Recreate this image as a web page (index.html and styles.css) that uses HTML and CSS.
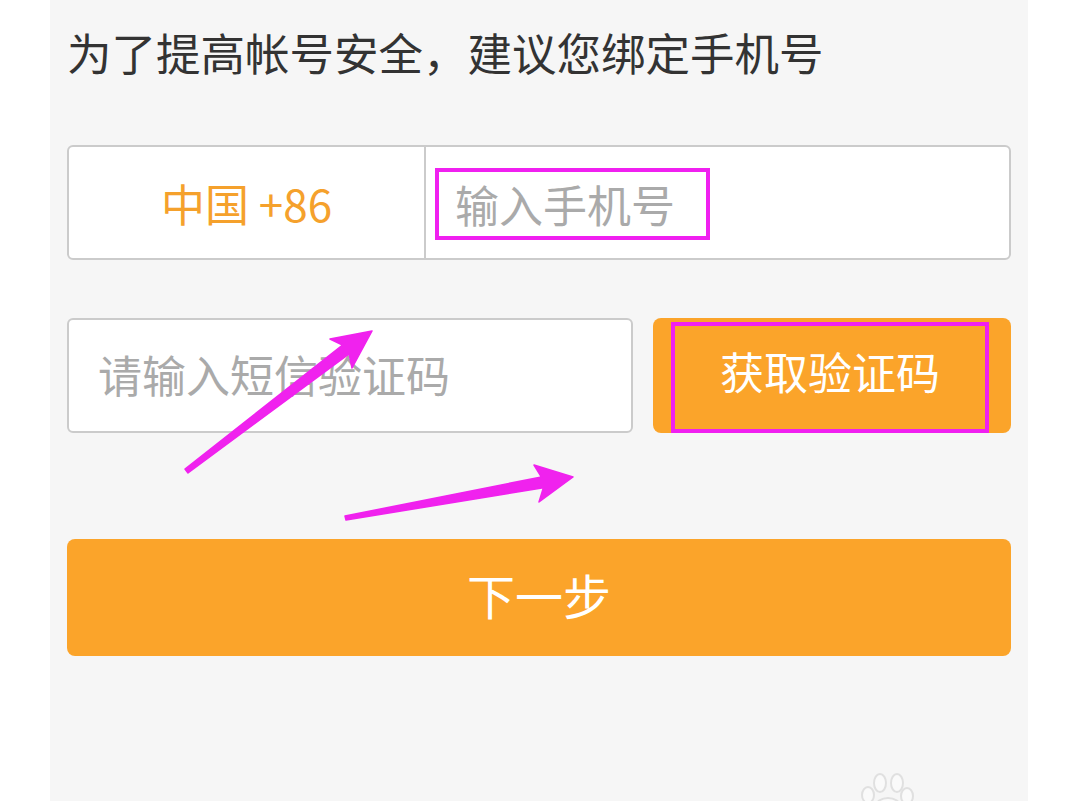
FILE: index.html
```html
<!DOCTYPE html>
<html lang="zh-CN">
<head>
<meta charset="utf-8">
<title>绑定手机号</title>
<link rel="stylesheet" href="styles.css">
</head>
<body>
<div class="panel">
  <h1 class="title">为了提高帐号安全，建议您绑定手机号</h1>
  <div class="phone-row">
    <div class="country">中国 +86</div>
    <div class="phone-input"><span class="mark mark-phone">输入手机号</span></div>
  </div>
  <div class="code-row">
    <div class="code-input">请输入短信验证码</div>
    <div class="code-btn"><span class="mark mark-btn">获取验证码</span></div>
  </div>
  <div class="next-btn">下一步</div>

  <svg class="arrows" viewBox="0 0 978 801" width="978" height="801" aria-hidden="true">
    <polygon class="arrow" points="135,469 138,473 299.1,353.8 302,368 322,331 280,339 292.5,345"/>
    <polygon class="arrow" points="295,516 296,520 493.4,487.8 489,502 523,477 484,465 491.4,477"/>
  </svg>

  <svg class="paw" viewBox="0 0 978 801" width="978" height="801" aria-hidden="true">
    <ellipse cx="818" cy="795" rx="6" ry="8"/>
    <ellipse cx="830" cy="783" rx="6" ry="9"/>
    <ellipse cx="847" cy="783" rx="6" ry="9"/>
    <ellipse cx="857" cy="796" rx="6" ry="8"/>
    <ellipse cx="838" cy="806" rx="12" ry="8"/>
  </svg>
</div>
</body>
</html>
```

FILE: styles.css
```css
* {
  box-sizing: border-box;
}

html, body {
  margin: 0;
  padding: 0;
  background: #ffffff;
}

body {
  font-family: "Noto Sans CJK SC", "Noto Sans", sans-serif;
  overflow: hidden;
}

.panel {
  position: relative;
  margin-left: 50px;
  width: 978px;
  height: 801px;
  background: #f6f6f6;
  padding: 0 17px;
  overflow: hidden;
}

.title {
  margin: 0;
  padding-top: 30px;
  font-size: 44.5px;
  line-height: 44px;
  font-weight: normal;
  color: #333333;
  white-space: nowrap;
}

.phone-row {
  margin-top: 71px;
  height: 115px;
  display: flex;
  background: #ffffff;
  border: 2px solid #cbcbcb;
  border-radius: 6px;
}

.country {
  width: 357px;
  border-right: 2px solid #cbcbcb;
  display: flex;
  align-items: center;
  justify-content: center;
  font-size: 44px;
  color: #f5a12c;
}

.phone-input {
  flex: 1;
  display: flex;
  align-items: center;
  padding-left: 9px;
  padding-top: 2px;
}

.mark {
  border: 4px solid #f020f0;
  display: flex;
  align-items: center;
}

.mark-phone {
  height: 72px;
  padding: 0 31px 0 16px;
  font-size: 44px;
  color: #aaaaaa;
}

.code-row {
  margin-top: 58px;
  height: 115px;
  display: flex;
  gap: 20px;
}

.code-input {
  width: 566px;
  background: #ffffff;
  border: 2px solid #cbcbcb;
  border-radius: 6px;
  display: flex;
  align-items: center;
  padding-left: 29px;
  padding-bottom: 3px;
  font-size: 44px;
  color: #aaaaaa;
}

.code-btn {
  flex: 1;
  background: #fba42a;
  border-radius: 8px;
  display: flex;
  padding: 4px 22px 0 18px;
}

.mark-btn {
  flex: 1;
  justify-content: center;
  font-size: 44px;
  color: #ffffff;
  padding-bottom: 14px;
}

.next-btn {
  margin-top: 106px;
  height: 117px;
  background: #fba42a;
  border-radius: 8px;
  display: flex;
  align-items: center;
  justify-content: center;
  padding-bottom: 8px;
  font-size: 48px;
  color: #ffffff;
}

.arrows,
.paw {
  position: absolute;
  left: 0;
  top: 0;
  pointer-events: none;
}

.arrow {
  fill: #f022ee;
  stroke: #f022ee;
  stroke-width: 1.5;
  stroke-linejoin: round;
}

.paw ellipse {
  fill: #fafafa;
  stroke: #e0e0e0;
  stroke-width: 2;
}
```
